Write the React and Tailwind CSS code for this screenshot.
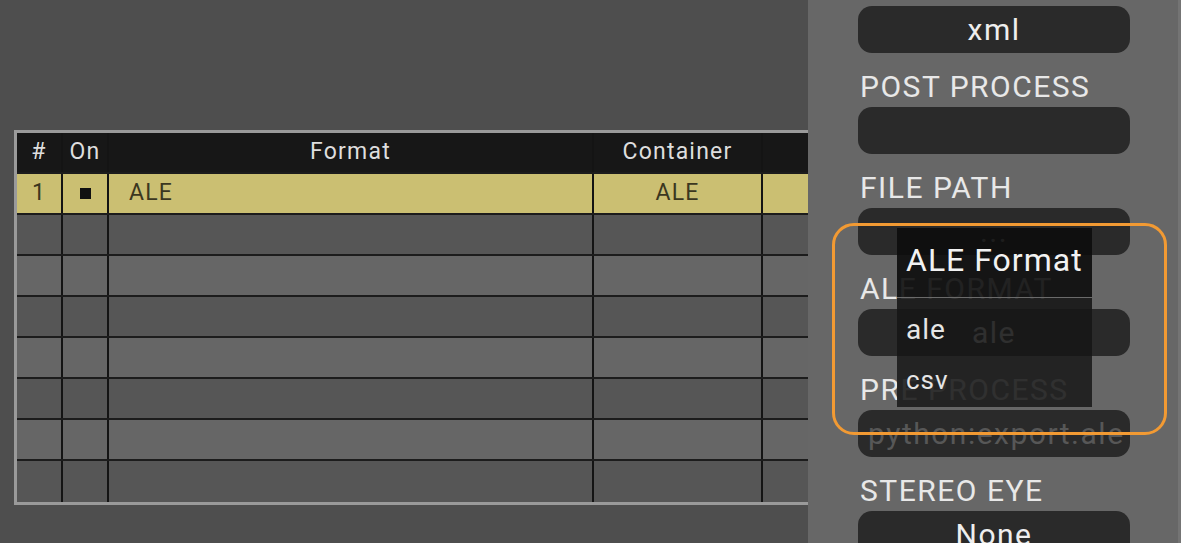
import React from "react";

const FONT = { fontFamily: "Roboto, 'Open Sans', sans-serif" };

function Row({ cells, cls, last }) {
  return (
    <div className={`flex h-[41px] ${last ? "h-[39px]" : "border-b-2 border-[#1c1c1c]"} ${cls}`}>
      {cells.map((c, i) => (
        <div
          key={i}
          className={`flex items-center ${c.w} ${i < 4 ? "border-r-2 border-[#141414]" : ""} ${c.align || "justify-center"}`}
        >
          {c.content}
        </div>
      ))}
    </div>
  );
}

const widths = ["w-[46px]", "w-[46px]", "w-[485px]", "w-[169px]", "flex-1"];

function cellsOf(contents) {
  return widths.map((w, i) => ({ w, content: contents[i] || null }));
}

function Label({ children }) {
  return (
    <div className="h-[54px] pt-[19px] pl-[2px] text-[30px] leading-[30px] tracking-[1.5px] text-[#e8e8e8] whitespace-nowrap">
      {children}
    </div>
  );
}

function Box({ children, className = "" }) {
  return (
    <div className={`h-[47px] w-[272px] rounded-[14px] bg-[#2a2a2a] flex items-center overflow-hidden text-[30px] leading-[30px] tracking-[1.5px] whitespace-nowrap ${className}`}>
      {children}
    </div>
  );
}

export default function App() {
  const header = cellsOf(["#", "On", "Format", "Container", ""]);
  const row1contents = [
    <span className="text-[#3b371f]">1</span>,
    <span className="block w-[11px] h-[11px] bg-[#111]" />,
    <span className="pl-[20px] text-[#3b371f]">ALE</span>,
    <span className="text-[#3b371f]">ALE</span>,
    null,
  ];
  const row1 = widths.map((w, i) => ({ w, content: row1contents[i], align: i === 2 ? "justify-start" : "justify-center" }));
  const empty = widths.map((w) => ({ w, content: null }));
  return (
    <div className="w-[1181px] h-[543px] flex overflow-hidden bg-[#4e4e4e]" style={FONT}>
      {/* Left area with table */}
      <div className="w-[808px] shrink-0 pt-[130px] pl-[14px] overflow-hidden">
        <div className="w-[820px] border-t-[3px] border-l-[3px] border-b-[3px] border-[#9a9a9a] text-[23px] tracking-[1.2px]">
          <div className="bg-[#171717] text-[#dedede]">
            <Row cells={header} cls="" />
          </div>
          <Row cells={row1} cls="bg-[#cbbf72]" />
          <Row cells={empty} cls="bg-[#565656]" />
          <Row cells={empty} cls="bg-[#666666]" />
          <Row cells={empty} cls="bg-[#565656]" />
          <Row cells={empty} cls="bg-[#666666]" />
          <Row cells={empty} cls="bg-[#565656]" />
          <Row cells={empty} cls="bg-[#666666]" />
          <Row cells={empty} cls="bg-[#565656]" last />
        </div>
      </div>

      {/* Right panel */}
      <div className="relative flex-1 bg-[#676767] border-r-[3px] border-[#747474] pl-[50px] pt-[6px] overflow-hidden">
        <Box className="justify-center text-[#eeeeee]">xml</Box>
        <Label>POST PROCESS</Label>
        <Box />
        <Label>FILE PATH</Label>
        <Box className="justify-center text-[#bbbbbb]">...</Box>
        <Label>ALE FORMAT</Label>
        <Box className="justify-center text-[#e0e0e0]">ale</Box>
        <Label>PRE PROCESS</Label>
        <Box className="pl-[10px] text-[#575757]">python:export.ale</Box>
        <Label>STEREO EYE</Label>
        <Box className="justify-center text-[#eeeeee]">None</Box>

        {/* Dropdown popup */}
        <div className="absolute left-[89px] top-[228px] w-[195px] h-[179px] flex flex-col">
          <div className="h-[70px] bg-[rgba(12,12,12,0.9)] border-b border-[#6a6a6a] pt-[16px] pl-[9px] text-[32px] leading-[32px] tracking-[1px] text-[#f2f2f2] whitespace-nowrap">
            ALE Format
          </div>
          <div className="h-[58px] bg-[rgba(22,22,22,0.88)] pt-[18px] pl-[9px] text-[28px] leading-[28px] tracking-[1px] text-[#e6e6e6]">
            ale
          </div>
          <div className="flex-1 bg-[rgba(28,28,28,0.9)] pt-[11px] pl-[9px] text-[26px] leading-[26px] tracking-[1px] text-[#e6e6e6]">
            csv
          </div>
        </div>

        {/* Orange highlight ring */}
        <div className="absolute left-[24px] top-[223px] w-[335px] h-[212px] rounded-[22px] border-[3px] border-[#f29a33] pointer-events-none" />
      </div>
    </div>
  );
}
